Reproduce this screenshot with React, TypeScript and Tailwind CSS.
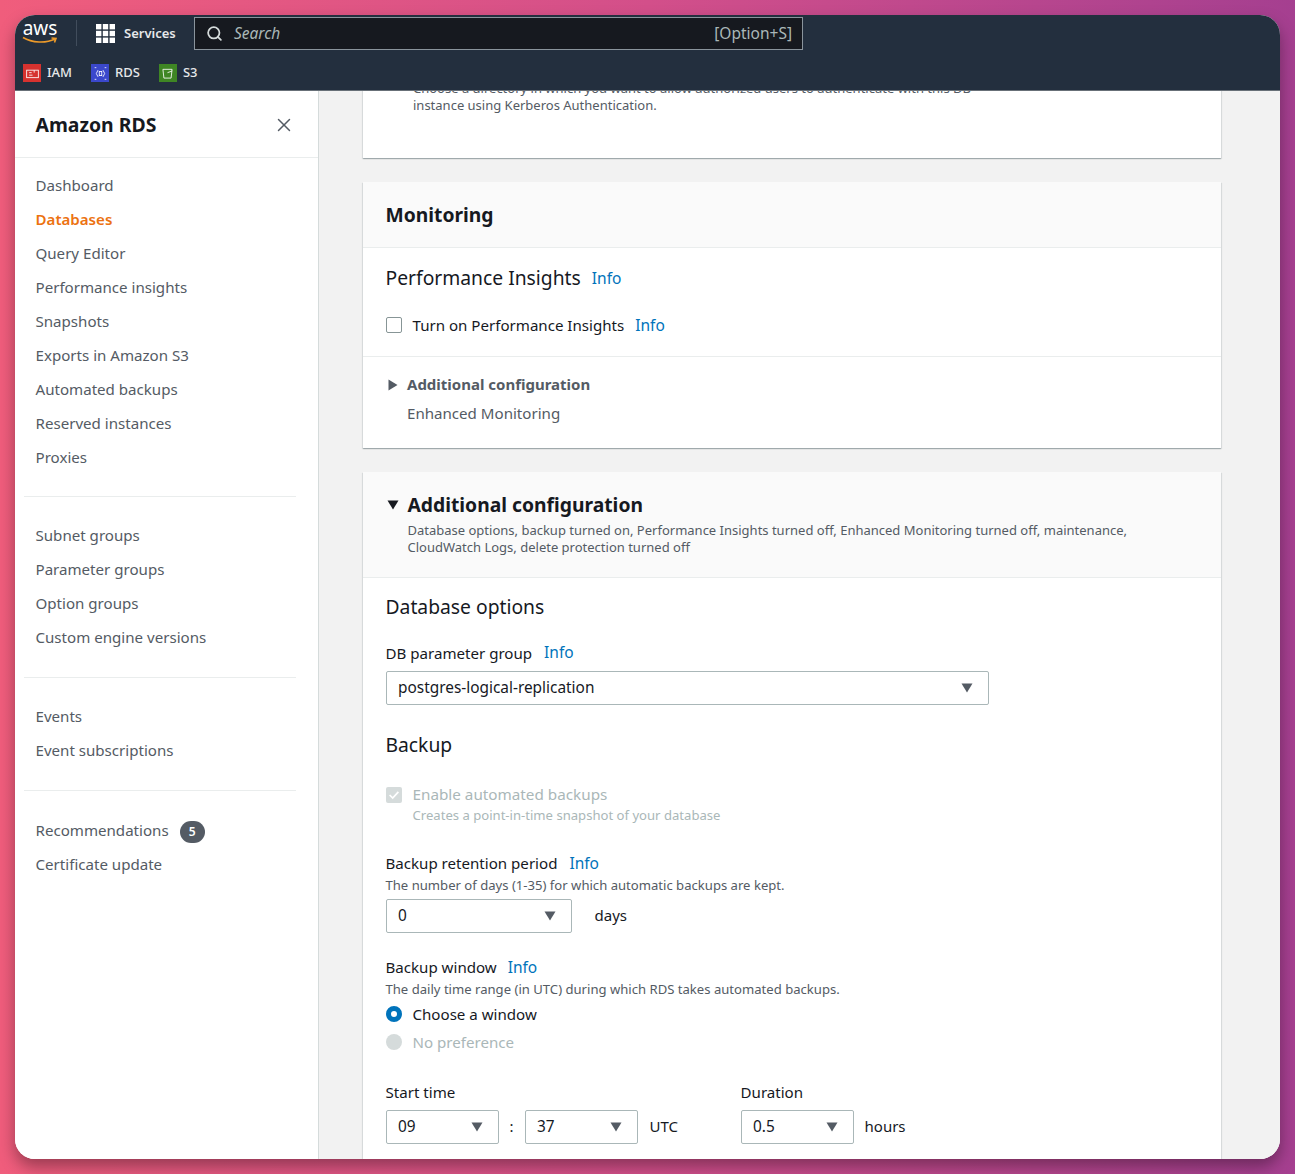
import { X, Search } from "lucide-react"

const font = "font-['Noto_Sans',sans-serif]"

const navGroups = [
  ["Dashboard", "Databases", "Query Editor", "Performance insights", "Snapshots", "Exports in Amazon S3", "Automated backups", "Reserved instances", "Proxies"],
  ["Subnet groups", "Parameter groups", "Option groups", "Custom engine versions"],
  ["Events", "Event subscriptions"],
]

function Caret({ className = "fill-[#545b64]" }: { className?: string }) {
  return (
    <svg viewBox="0 0 12 10" className={`h-[10px] w-[12px] ${className}`}>
      <path d="M0.5 0.5h11L6 9.5z" />
    </svg>
  )
}

function Select({ value, className = "" }: { value: string; className?: string }) {
  return (
    <div className={`flex h-[34px] items-center justify-between rounded-[2px] border border-[#aab7b8] bg-white pl-[11.5px] pr-[15px] text-[15.4px] text-[#16191f] ${className}`}>
      <span>{value}</span>
      <Caret />
    </div>
  )
}

function Info({ className = "" }: { className?: string }) {
  return <span className={`text-[15.5px] text-[#0073bb] ${className}`}>Info</span>
}

function Favorite({ label, color, children }: { label: string; color: string; children: React.ReactNode }) {
  return (
    <div className="flex items-center gap-[6px]">
      <div className={`flex h-[18px] w-[18px] items-center justify-center ${color}`}>
        <svg viewBox="0 0 18 18" className="h-[15px] w-[15px] fill-none stroke-white" strokeWidth="1">
          {children}
        </svg>
      </div>
      <span className="text-[13px] font-medium text-[#e6e8ea]">{label}</span>
    </div>
  )
}

function Sidebar() {
  return (
    <aside className="w-[304px] shrink-0 border-r border-[#d5dbdb] bg-white">
      <div className="flex h-[67px] items-center justify-between border-b border-[#eaeded] pl-[20.5px] pr-[23px] pt-[2px]">
        <h2 className="text-[19.4px] font-bold text-[#16191f]">Amazon RDS</h2>
        <X className="h-[22px] w-[22px] text-[#545b64]" strokeWidth={1.6} />
      </div>
      <nav className="pt-[12px]">
        {navGroups.map((group, i) => (
          <div key={group[0]} className={`ml-[9px] mr-[22px] mb-[23px] border-b border-[#eaeded] pl-[11.5px] ${i === 0 ? "pb-[20px]" : "pb-[21px]"}`}>
            {group.map((item) => (
              <div
                key={item}
                className={`flex h-[34px] items-center pb-[3px] text-[15.1px] ${item === "Databases" ? "font-semibold text-[#ec7211]" : "text-[#545b64]"}`}
              >
                {item}
              </div>
            ))}
          </div>
        ))}
        <div className="pl-[20.5px]">
          <div className="flex h-[35px] items-center text-[15.1px] text-[#545b64]">
            <span className="-mt-[3px]">Recommendations</span>
            <span className="ml-[11px] flex h-[22px] w-[25px] items-center justify-center rounded-full bg-[#545b64] text-[12px] font-semibold text-white">5</span>
          </div>
          <div className="flex h-[34px] items-center pb-[3px] text-[15.1px] text-[#545b64]">Certificate update</div>
        </div>
      </nav>
    </aside>
  )
}

function Header() {
  return (
    <header className="h-[76px] shrink-0 border-b border-[#687078] bg-[#232f3e]">
      <div className="flex h-[36px] items-center">
        <div className="ml-[6px] flex h-[34px] w-[38px] flex-col items-center pt-[1px]">
          <span className="text-[19px] leading-[22px] text-white">aws</span>
          <svg viewBox="0 0 36 8" className="-mt-[3px] h-[8px] w-[36px] fill-none stroke-[#ec9a2a]" strokeWidth="1.6">
            <path d="M1 1.5C10 7 24 7.5 33 3M29.5 2l4.5.5-1.5 4" />
          </svg>
        </div>
        <div className="ml-[17px] h-[26px] w-px bg-[#414d5c]" />
        <svg viewBox="0 0 19 19" className="ml-[19px] h-[19px] w-[19px] fill-white">
          <rect x="0" y="0" width="5.4" height="5.4" /><rect x="6.8" y="0" width="5.4" height="5.4" /><rect x="13.6" y="0" width="5.4" height="5.4" />
          <rect x="0" y="6.8" width="5.4" height="5.4" /><rect x="6.8" y="6.8" width="5.4" height="5.4" /><rect x="13.6" y="6.8" width="5.4" height="5.4" />
          <rect x="0" y="13.6" width="5.4" height="5.4" /><rect x="6.8" y="13.6" width="5.4" height="5.4" /><rect x="13.6" y="13.6" width="5.4" height="5.4" />
        </svg>
        <span className="ml-[9px] mt-[1px] w-[52px] text-[13px] font-semibold text-[#e6e8ea]">Services</span>
        <div className="ml-[18px] flex h-[33px] w-[609px] items-center border border-[#8a949c] bg-[#16191f] pl-[11px] pr-[10px]">
          <Search className="h-[17px] w-[17px] text-[#d5dbdb]" strokeWidth={2.5} />
          <span className="ml-[11px] mt-[2px] text-[15.5px] italic text-[#aab7b8]">Search</span>
          <span className="ml-auto mt-[2px] text-[15.5px] text-[#aab7b8]">[Option+S]</span>
        </div>
      </div>
      <div className="mt-[8px] flex h-[28px] items-center">
        <div className="ml-[8px] flex items-center gap-[19px]">
          <Favorite label="IAM" color="bg-[#d6322f]">
            <rect x="2" y="5" width="14" height="9" /><path d="M5 8h3M5 11h4M11 5v3" />
          </Favorite>
          <Favorite label="RDS" color="bg-[#3b48cc]">
            <path d="M6 5L4 9l2 4M12 5l2 4-2 4" /><rect x="7.5" y="6.5" width="3" height="5" /><path d="M2 2h2M14 2h2M2 16h2M14 16h2" />
          </Favorite>
          <Favorite label="S3" color="bg-[#3f8624]">
            <path d="M3.5 4h11l-1.2 10.5H4.7zM9 8l5.5-2" />
          </Favorite>
        </div>
      </div>
    </header>
  )
}

function Card({ children, className = "" }: { children: React.ReactNode; className?: string }) {
  return <section className={`bg-white shadow-[0_1px_1px_0_rgba(0,28,36,0.22),1px_1px_1px_0_rgba(0,28,36,0.08),-1px_1px_1px_0_rgba(0,28,36,0.08)] ${className}`}>{children}</section>
}

function Main() {
  return (
    <main className="min-w-0 flex-1 overflow-hidden bg-[#f2f2f2] pl-[44px] pr-[59px]">
      {/* card scrolled under the top bar */}
      <Card className="-mt-[12px] h-[79px] pl-[50px] pt-[1px] text-[13px] leading-[17px] text-[#545b64]">
        <p className="w-[600px] whitespace-nowrap">Choose a directory in which you want to allow authorized users to authenticate with this DB</p>
        <p>instance using Kerberos Authentication.</p>
      </Card>

      <Card className="mt-[24px] h-[266px]">
        <div className="flex h-[66px] items-center border-b border-[#eaeded] bg-[#fafafa] pl-[22.5px] pt-[2px] text-[19.3px] font-bold text-[#16191f]">Monitoring</div>
        <div className="flex h-[109px] flex-col border-b border-[#eaeded] pl-[22.5px]">
          <div className="mt-[16px] flex items-center">
            <span className="text-[19.3px] text-[#16191f]">Performance Insights</span>
            <Info className="ml-[11px] mt-[1px]" />
          </div>
          <div className="mt-[20px] flex items-center">
            <div className="h-[16px] w-[16px] rounded-[2px] border border-[#879596] bg-white" />
            <span className="ml-[11px] text-[15.1px] text-[#16191f]">Turn on Performance Insights</span>
            <Info className="ml-[11px] mt-[1px]" />
          </div>
        </div>
        <div className="pl-[25px] pt-[17px]">
          <div className="flex items-center">
            <svg viewBox="0 0 10 12" className="h-[12px] w-[10px] fill-[#545b64]"><path d="M0.5 0.5v11L9.5 6z" /></svg>
            <span className="ml-[9px] -mt-[1px] text-[15px] font-bold text-[#545b64]">Additional configuration</span>
          </div>
          <div className="ml-[19px] mt-[6px] text-[15.1px] text-[#545b64]">Enhanced Monitoring</div>
        </div>
      </Card>

      <Card className="mt-[24px] h-[720px]">
        <div className="h-[106px] border-b border-[#eaeded] bg-[#fafafa] pl-[23.5px] pt-[19px]">
          <div className="flex items-center">
            <Caret className="fill-[#16191f]" />
            <h2 className="ml-[9px] text-[19.3px] font-bold leading-[28px] text-[#16191f]">Additional configuration</h2>
          </div>
          <p className="ml-[21px] mt-[3px] w-[740px] text-[13px] leading-[17px] text-[#545b64]">
            Database options, backup turned on, Performance Insights turned off, Enhanced Monitoring turned off, maintenance, CloudWatch Logs, delete protection turned off
          </p>
        </div>
        <div className="pl-[22.5px]">
          <h3 className="mt-[15px] text-[19.3px] leading-[28px] text-[#16191f]">Database options</h3>
          <div className="mt-[22px] flex h-[20px] items-center">
            <span className="text-[15.1px] text-[#16191f]">DB parameter group</span>
            <Info className="ml-[12px]" />
          </div>
          <Select value="postgres-logical-replication" className="mt-[8px] w-[603.5px]" />
          <h3 className="mt-[26px] text-[19.3px] leading-[28px] text-[#16191f]">Backup</h3>

          <div className="mt-[25px] flex h-[22px] items-center">
            <div className="flex h-[16px] w-[16px] items-center justify-center rounded-[2px] bg-[#d5dbdb]">
              <svg viewBox="0 0 16 16" className="h-[14px] w-[14px] fill-none stroke-white" strokeWidth="2"><path d="M3 8l3.5 3.5L13 4.5" /></svg>
            </div>
            <span className="ml-[11px] -mt-[1px] text-[15.25px] text-[#aab7b8]">Enable automated backups</span>
          </div>
          <p className="ml-[27px] text-[13.1px] leading-[19px] text-[#aab7b8]">Creates a point-in-time snapshot of your database</p>

          <div className="mt-[28px] flex h-[22px] items-center">
            <span className="-mt-[1px] text-[15.1px] text-[#16191f]">Backup retention period</span>
            <Info className="ml-[12px]" />
          </div>
          <p className="mt-[1px] text-[13.1px] leading-[19px] text-[#545b64]">The number of days (1-35) for which automatic backups are kept.</p>
          <div className="mt-[4px] flex items-center">
            <Select value="0" className="w-[186px]" />
            <span className="ml-[23px] -mt-[2px] text-[15px] text-[#16191f]">days</span>
          </div>

          <div className="mt-[24px] flex h-[22px] items-center">
            <span className="-mt-[1px] text-[15.1px] text-[#16191f]">Backup window</span>
            <Info className="ml-[11px]" />
          </div>
          <p className="mt-[1px] text-[13.1px] leading-[19px] text-[#545b64]">The daily time range (in UTC) during which RDS takes automated backups.</p>
          <div className="mt-[1px] flex h-[28px] items-center">
            <div className="h-[16px] w-[16px] rounded-full border-[5px] border-[#0073bb] bg-white" />
            <span className="ml-[11px] text-[15.1px] text-[#16191f]">Choose a window</span>
          </div>
          <div className="flex h-[28px] items-center">
            <div className="h-[16px] w-[16px] rounded-full bg-[#d5dbdb]" />
            <span className="ml-[11px] text-[15.1px] text-[#aab7b8]">No preference</span>
          </div>

          <div className="mt-[25px] flex">
            <div>
              <div className="h-[22px] text-[15.1px] leading-[22px] text-[#16191f]">Start time</div>
              <div className="mt-[7px] flex items-center">
                <Select value="09" className="w-[113px]" />
                <span className="mx-[11px] -mt-[2px] text-[15px] text-[#16191f]">:</span>
                <Select value="37" className="w-[113px]" />
                <span className="ml-[12px] -mt-[2px] w-[91px] text-[15px] text-[#16191f]">UTC</span>
              </div>
            </div>
            <div>
              <div className="h-[22px] text-[15.1px] leading-[22px] text-[#16191f]">Duration</div>
              <div className="mt-[7px] flex items-center">
                <Select value="0.5" className="w-[113px]" />
                <span className="ml-[11px] -mt-[2px] text-[15px] text-[#16191f]">hours</span>
              </div>
            </div>
          </div>
        </div>
      </Card>
    </main>
  )
}

export default function App() {
  return (
    <div className={`h-[1174px] w-[1295px] overflow-hidden bg-gradient-to-r from-[#f05d7c] via-[#d34f8a] to-[#a53f90] p-[15px] ${font}`}>
      <div className="flex h-[1144px] w-[1265px] flex-col overflow-hidden rounded-[20px] bg-white shadow-[0_8px_16px_rgba(0,0,0,0.35)]">
        <Header />
        <div className="flex min-h-0 flex-1">
          <Sidebar />
          <Main />
        </div>
      </div>
    </div>
  )
}
